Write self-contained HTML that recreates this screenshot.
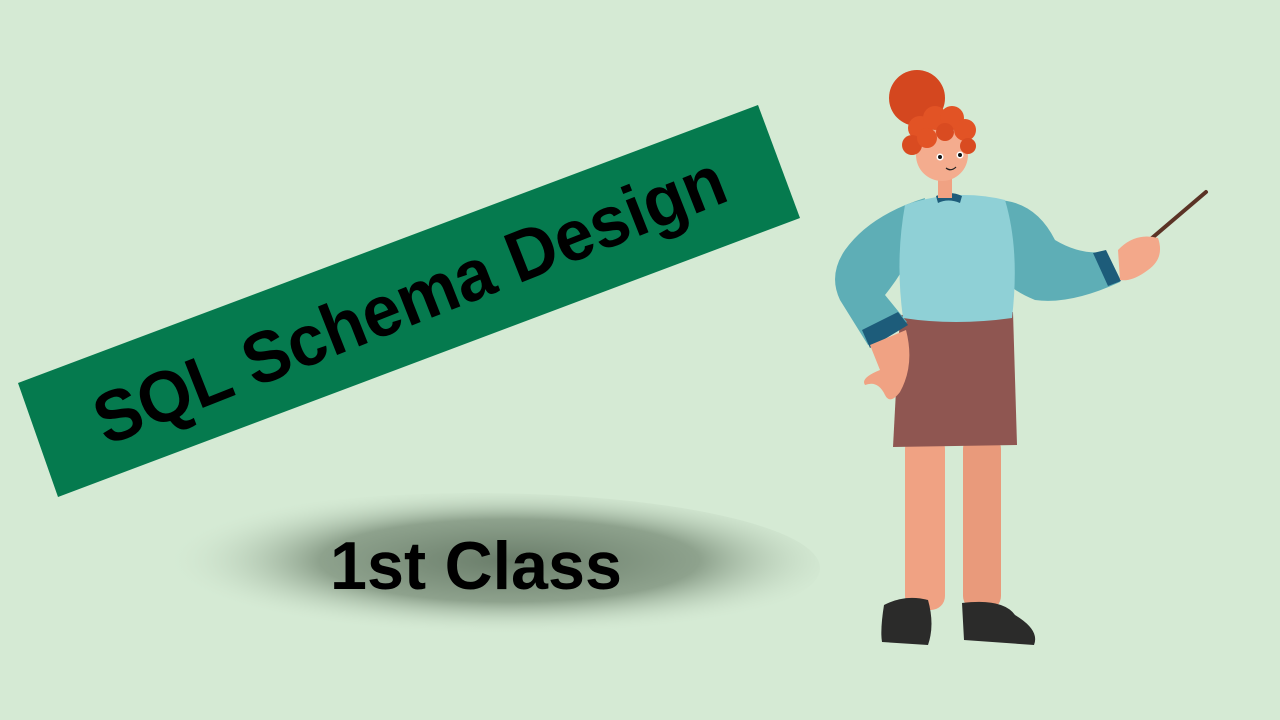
<!DOCTYPE html>
<html><head><meta charset="utf-8"><style>
html,body{margin:0;padding:0;width:1280px;height:720px;overflow:hidden;background:#d5ead4}
svg{display:block}
</style></head><body>
<svg width="1280" height="720" viewBox="0 0 1280 720" xmlns="http://www.w3.org/2000/svg">
<defs>
<radialGradient id="sh" cx="55%" cy="45%" r="50%">
<stop offset="0" stop-color="#6a7d6a"/>
<stop offset="0.55" stop-color="#8ea28d"/>
<stop offset="1" stop-color="#d5ead4" stop-opacity="0"/>
</radialGradient>
</defs>
<rect width="1280" height="720" fill="#d5ead4"/>
<ellipse cx="475" cy="568" rx="345" ry="75" fill="url(#sh)"/>
<polygon points="18,383 758,105 800,218 58,497" fill="#057a4e"/>
<text transform="translate(106,446) rotate(-21.5)" font-family="Liberation Sans, sans-serif" font-weight="bold" font-size="72" fill="#000" textLength="672" lengthAdjust="spacingAndGlyphs">SQL Schema Design</text>
<text x="330" y="589" font-family="Liberation Sans, sans-serif" font-weight="bold" font-size="68" fill="#000" textLength="292" lengthAdjust="spacingAndGlyphs">1st Class</text>

<line x1="1206" y1="192" x2="1152" y2="238" stroke="#5a3325" stroke-width="4" stroke-linecap="round"/>
<rect x="905" y="435" width="40" height="175" rx="14" fill="#f0a283"/>
<rect x="963" y="435" width="38" height="175" rx="14" fill="#e99a7b"/>
<path d="M884,605 Q880,630 882,642 L928,645 Q935,625 928,600 Q905,594 884,605Z" fill="#2b2b2a"/>
<path d="M962,603 L964,640 L1034,645 Q1040,630 1015,615 Q1003,598 962,603Z" fill="#2b2b2a"/>
<path d="M900,315 L1013,312 L1017,445 L893,447Z" fill="#8f5651"/>
<path d="M995,200 Q1035,200 1055,240 Q1080,255 1105,252 L1120,282 Q1070,305 1035,300 Q1010,290 1000,275Z" fill="#5eaeb6"/>
<path d="M1093,253 L1106,250 L1121,281 L1108,286Z" fill="#1d5c7a"/>
<path d="M1118,250 Q1135,232 1158,238 Q1165,258 1148,270 Q1132,282 1120,280Z" fill="#f3a88a"/>
<path d="M925,198 Q870,215 845,250 Q828,275 840,300 L868,345 L907,322 L885,295 Q905,270 915,245Z" fill="#5eaeb6"/>
<path d="M862,330 L898,312 L908,325 L870,348Z" fill="#1d5c7a"/>
<path d="M870,345 L906,330 Q915,365 900,392 Q890,405 885,395 Q878,380 865,385 Q860,378 880,370 Z" fill="#f0a283"/>
<path d="M905,205 Q955,188 1005,200 Q1020,250 1012,318 Q955,326 903,318 Q895,260 905,205Z" fill="#8fd0d6"/>
<path d="M936,196 Q950,190 962,196 L960,203 Q948,198 938,203Z" fill="#1d5c7a"/>
<rect x="938" y="170" width="14" height="28" fill="#f0a283"/>
<ellipse cx="942" cy="155" rx="26" ry="26" fill="#f4ac8e"/>
<circle cx="940" cy="157" r="3.5" fill="#fff"/><circle cx="940" cy="157" r="2" fill="#111"/>
<circle cx="960" cy="155" r="3.5" fill="#fff"/><circle cx="960" cy="155" r="2" fill="#111"/>
<path d="M946,168 Q951,172 956,167" stroke="#222" stroke-width="1.2" fill="none"/>
<circle cx="917" cy="98" r="28" fill="#d4471f"/>
<circle cx="920" cy="128" r="12" fill="#e25325"/>
<circle cx="935" cy="118" r="12" fill="#e25325"/>
<circle cx="952" cy="118" r="12" fill="#e25325"/>
<circle cx="965" cy="130" r="11" fill="#e25325"/>
<circle cx="912" cy="145" r="10" fill="#d94b21"/>
<circle cx="927" cy="138" r="10" fill="#e25325"/>
<circle cx="945" cy="132" r="9" fill="#d94b21"/>
<circle cx="968" cy="146" r="8" fill="#d94b21"/>
</svg>
</body></html>
